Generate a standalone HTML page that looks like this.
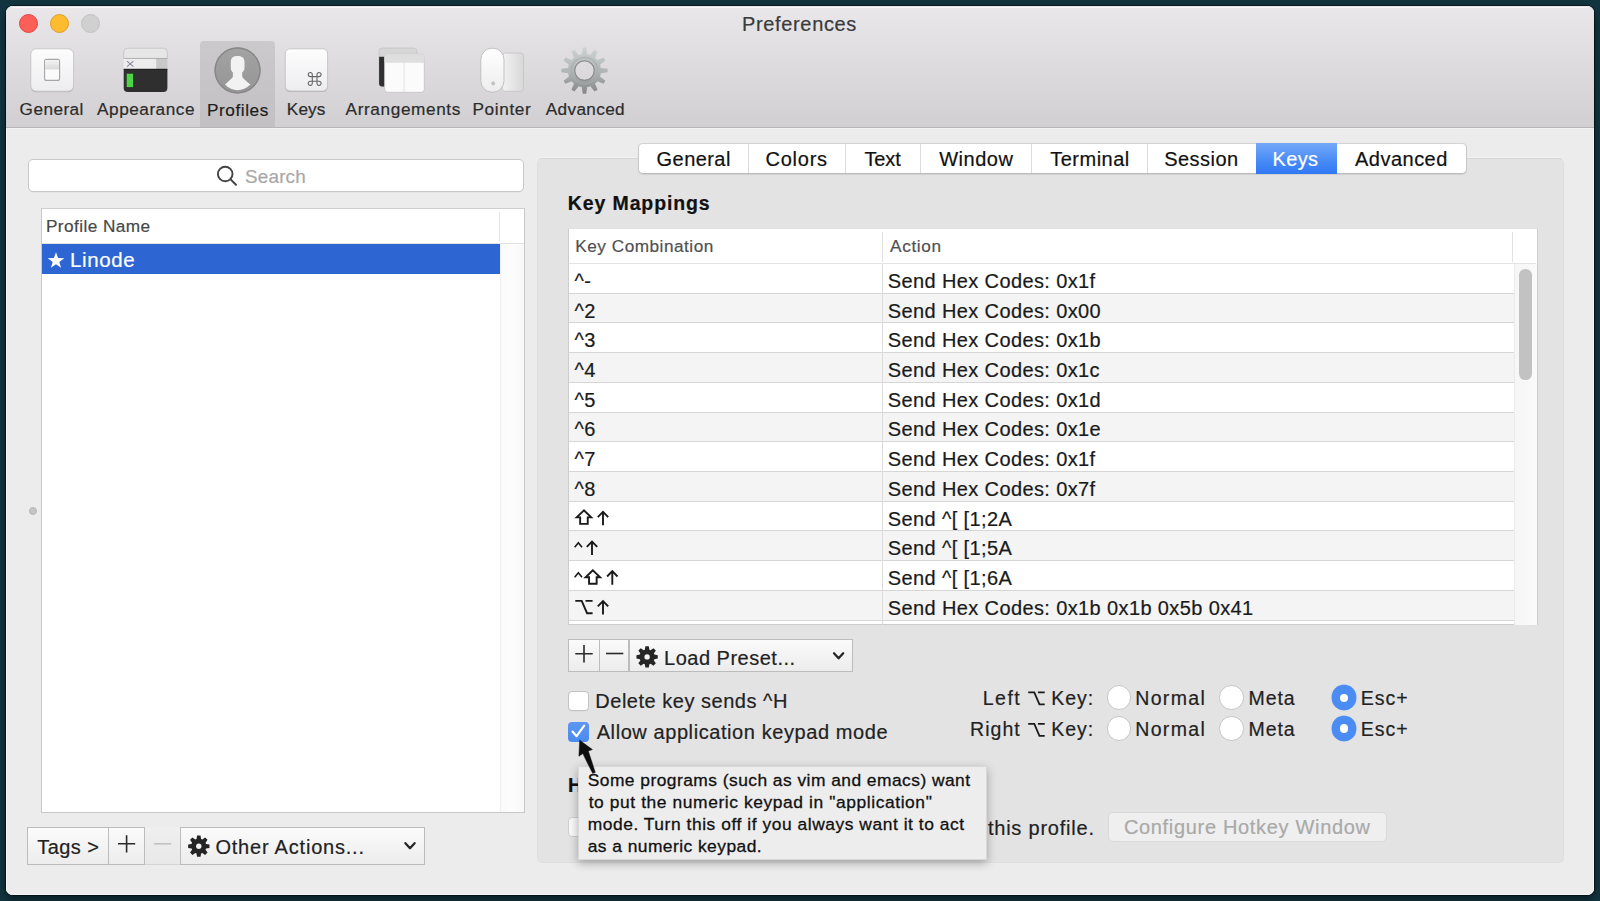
<!DOCTYPE html>
<html><head><meta charset="utf-8">
<style>
html,body{margin:0;padding:0}
body{width:1600px;height:901px;background:#12343f;position:relative;overflow:hidden;font-family:"Liberation Sans",sans-serif}
div{box-sizing:border-box}
.a{position:absolute}
.t{position:absolute;white-space:pre;font-family:"Liberation Sans",sans-serif}
svg{position:absolute;overflow:visible}
</style></head><body>
<!-- window -->
<div class="a" style="left:6px;top:6px;width:1588px;height:889px;border-radius:7px 7px 7px 7px;background:#ececec;box-shadow:0 0 0 0.8px rgba(0,5,10,0.75), 0 5px 10px rgba(0,0,0,0.45), inset 1px 0 0 #f7f7f7, inset -1px 0 0 #f5f5f5, inset 0 -1px 0 #f7f7f7"></div>
<!-- toolbar -->
<div class="a" style="left:6px;top:6px;width:1588px;height:122px;border-radius:7px 7px 0 0;background:linear-gradient(#e9e7e9,#d1cfd2);border-bottom:1px solid #b6b5b6"></div>
<div class="a" style="left:6px;top:128px;width:1588px;height:1px;background:#f2f2f2"></div>
<div class="a" style="left:12px;top:6.5px;width:1576px;height:1px;background:rgba(255,255,255,0.6)"></div>
<!-- traffic lights -->
<div class="a" style="left:18.7px;top:13.8px;width:19.4px;height:19.4px;border-radius:50%;background:#fb5f57;border:1px solid #e2463f"></div>
<div class="a" style="left:49.7px;top:13.8px;width:19.4px;height:19.4px;border-radius:50%;background:#fdbb2f;border:1px solid #e09e2a"></div>
<div class="a" style="left:80.7px;top:13.8px;width:19.4px;height:19.4px;border-radius:50%;background:#d1d0d1;border:1px solid #c3c2c3"></div>
<!-- Profiles selected -->
<div class="a" style="left:200px;top:41px;width:75px;height:86px;border-radius:4px 4px 0 0;background:linear-gradient(#cbc9cb,#c2c0c2)"></div>


<!-- search -->
<div class="a" style="left:27.8px;top:159.2px;width:496.7px;height:32.4px;border-radius:5px;background:#fff;border:1px solid #c9c9c9;box-shadow:0 0.5px 0 rgba(0,0,0,0.05)"></div>
<svg style="left:0;top:0" width="1" height="1"><circle cx="225.2" cy="174" r="7.3" fill="none" stroke="#444" stroke-width="1.9"/><line x1="230.6" y1="179.4" x2="236" y2="184.8" stroke="#444" stroke-width="2" stroke-linecap="round"/></svg>

<!-- profile list -->
<div class="a" style="left:41px;top:208.3px;width:483.6px;height:604.5px;background:#fff;border:1px solid #c8c8c8;border-top-color:#cfcfcf"></div>
<div class="a" style="left:42px;top:243px;width:482px;height:1px;background:#e3e3e3"></div>
<div class="a" style="left:499.3px;top:212px;width:1px;height:30px;background:#e6e6e6"></div>
<div class="a" style="left:500px;top:244px;width:24px;height:568px;background:linear-gradient(90deg,#fafafa,#fdfdfd 50%,#f7f7f7);border-left:1px solid #f0f0f0"></div>
<div class="a" style="left:41.8px;top:244px;width:458.5px;height:29.5px;background:#2d66d3"></div>
<svg style="left:0;top:0" width="1" height="1"><path d="M56.0,252.2 L58.1,258.1 L64.3,258.2 L59.3,261.9 L61.1,267.8 L56.0,264.3 L50.9,267.8 L52.7,261.9 L47.7,258.2 L53.9,258.1 Z" fill="#fff"/></svg>
<div class="a" style="left:29px;top:506.5px;width:8px;height:8px;border-radius:50%;background:#c4c4c4;border:1px solid #b9b9b9"></div>

<!-- bottom-left buttons -->
<div class="a" style="left:27.2px;top:826.6px;width:81.4px;height:38px;background:linear-gradient(#fbfbfb,#ececec);border:1px solid #bcbcbc"></div>
<div class="a" style="left:107.8px;top:826.6px;width:37px;height:38px;background:linear-gradient(#fbfbfb,#ececec);border:1px solid #bcbcbc"></div>
<div class="a" style="left:144.5px;top:826.6px;width:36px;height:38px;background:linear-gradient(#efefef,#e8e8e8);border-bottom:1px solid #d4d4d4"></div>
<div class="a" style="left:180.3px;top:826.6px;width:244.3px;height:38px;background:linear-gradient(#fbfbfb,#ececec);border:1px solid #bcbcbc"></div>
<svg style="left:0;top:0" width="1" height="1">
<path d="M126.6,835.2 V852.4 M118,843.8 H135.2" stroke="#2a2a2a" stroke-width="1.6"/>
<path d="M154,843.8 H171.3" stroke="#c2c2c2" stroke-width="1.6"/>
<path d="M405.4,843.2 L410,848.2 L414.6,843.2" fill="none" stroke="#262626" stroke-width="2.3" stroke-linecap="round" stroke-linejoin="round"/>
</svg>

<!-- right panel -->
<div class="a" style="left:537.3px;top:158.3px;width:1026.9px;height:704.7px;border-radius:5px;background:#e3e3e3;border:1px solid #dfdfdf;border-top-color:#d6d6d6;box-shadow:0 -1px 0 #f2f2f2"></div>

<!-- tab bar -->
<div class="a" style="left:637.8px;top:143.1px;width:829px;height:31.2px;border-radius:5px;background:#fff;border:1px solid #c8c8c8;border-top-color:#d3d3d3;border-bottom-color:#b9b9b9;box-shadow:0 0.5px 1px rgba(0,0,0,0.08)"></div>
<div class="a" style="left:748.2px;top:144.1px;width:1px;height:29.2px;background:#dcdcdc"></div>
<div class="a" style="left:845.3px;top:144.1px;width:1px;height:29.2px;background:#dcdcdc"></div>
<div class="a" style="left:919.6px;top:144.1px;width:1px;height:29.2px;background:#dcdcdc"></div>
<div class="a" style="left:1031.1px;top:144.1px;width:1px;height:29.2px;background:#dcdcdc"></div>
<div class="a" style="left:1147px;top:144.1px;width:1px;height:29.2px;background:#dcdcdc"></div>
<div class="a" style="left:1256.3px;top:143.1px;width:80.8px;height:31.2px;background:linear-gradient(#74a9f8,#4a8cf6 55%,#3079f4)"></div>

<!-- table -->
<div class="a" style="left:568.3px;top:228.4px;width:969.3px;height:397px;background:#fff;border:1px solid #cdcdcd;border-top-color:#e0e0e0"></div>
<div class="a" style="left:569.3px;top:263px;width:967px;height:1px;background:#e4e4e4"></div>
<div class="a" style="left:882px;top:232px;width:1px;height:30px;background:#e2e2e2"></div>
<div class="a" style="left:1512px;top:232px;width:1px;height:30px;background:#e2e2e2"></div>
<div class="a" style="left:569.3px;top:264.00px;width:944.3px;height:29.72px;background:#ffffff"></div>
<div class="a" style="left:569.3px;top:292.72px;width:944.3px;height:1px;background:#d6d6d6"></div>
<div class="a" style="left:569.3px;top:293.72px;width:944.3px;height:29.72px;background:#f4f4f4"></div>
<div class="a" style="left:569.3px;top:322.44px;width:944.3px;height:1px;background:#d6d6d6"></div>
<div class="a" style="left:569.3px;top:323.44px;width:944.3px;height:29.72px;background:#ffffff"></div>
<div class="a" style="left:569.3px;top:352.16px;width:944.3px;height:1px;background:#d6d6d6"></div>
<div class="a" style="left:569.3px;top:353.16px;width:944.3px;height:29.72px;background:#f4f4f4"></div>
<div class="a" style="left:569.3px;top:381.88px;width:944.3px;height:1px;background:#d6d6d6"></div>
<div class="a" style="left:569.3px;top:382.88px;width:944.3px;height:29.72px;background:#ffffff"></div>
<div class="a" style="left:569.3px;top:411.60px;width:944.3px;height:1px;background:#d6d6d6"></div>
<div class="a" style="left:569.3px;top:412.60px;width:944.3px;height:29.72px;background:#f4f4f4"></div>
<div class="a" style="left:569.3px;top:441.32px;width:944.3px;height:1px;background:#d6d6d6"></div>
<div class="a" style="left:569.3px;top:442.32px;width:944.3px;height:29.72px;background:#ffffff"></div>
<div class="a" style="left:569.3px;top:471.04px;width:944.3px;height:1px;background:#d6d6d6"></div>
<div class="a" style="left:569.3px;top:472.04px;width:944.3px;height:29.72px;background:#f4f4f4"></div>
<div class="a" style="left:569.3px;top:500.76px;width:944.3px;height:1px;background:#d6d6d6"></div>
<div class="a" style="left:569.3px;top:501.76px;width:944.3px;height:29.72px;background:#ffffff"></div>
<div class="a" style="left:569.3px;top:530.48px;width:944.3px;height:1px;background:#d6d6d6"></div>
<div class="a" style="left:569.3px;top:531.48px;width:944.3px;height:29.72px;background:#f4f4f4"></div>
<div class="a" style="left:569.3px;top:560.20px;width:944.3px;height:1px;background:#d6d6d6"></div>
<div class="a" style="left:569.3px;top:561.20px;width:944.3px;height:29.72px;background:#ffffff"></div>
<div class="a" style="left:569.3px;top:589.92px;width:944.3px;height:1px;background:#d6d6d6"></div>
<div class="a" style="left:569.3px;top:590.92px;width:944.3px;height:29.72px;background:#f4f4f4"></div>
<div class="a" style="left:569.3px;top:619.64px;width:944.3px;height:1px;background:#d6d6d6"></div>
<div class="a" style="left:569.3px;top:620.64px;width:944.3px;height:3.86px;background:#ffffff"></div>
<div class="a" style="left:882px;top:264px;width:1px;height:360.5px;background:#dcdcdc"></div>
<div class="a" style="left:1513.6px;top:264px;width:23px;height:360.5px;background:linear-gradient(90deg,#f6f6f6,#fafafa);border-left:1px solid #ebebeb"></div>
<div class="a" style="left:1519.4px;top:269px;width:12.6px;height:111px;border-radius:6.3px;background:#c2c2c2"></div>

<!-- preset buttons -->
<div class="a" style="left:568.3px;top:639.3px;width:31.5px;height:32.4px;background:linear-gradient(#fbfbfb,#ececec);border:1px solid #bcbcbc"></div>
<div class="a" style="left:598.8px;top:639.3px;width:30.7px;height:32.4px;background:linear-gradient(#fbfbfb,#ececec);border:1px solid #bcbcbc"></div>
<div class="a" style="left:628.5px;top:639.3px;width:224.2px;height:32.4px;background:linear-gradient(#fbfbfb,#ececec);border:1px solid #bcbcbc"></div>
<svg style="left:0;top:0" width="1" height="1">
<path d="M584,645 V662.4 M575.3,653.7 H592.7" stroke="#2a2a2a" stroke-width="1.6"/>
<path d="M606,653.5 H623.3" stroke="#2a2a2a" stroke-width="1.6"/>
<path d="M834,653.3 L838.6,658.3 L843.2,653.3" fill="none" stroke="#262626" stroke-width="2.3" stroke-linecap="round" stroke-linejoin="round"/>
</svg>

<!-- checkboxes -->
<div class="a" style="left:567.7px;top:690.7px;width:21px;height:20.3px;border-radius:4px;background:#fff;border:1px solid #c3c3c3;box-shadow:0 0.5px 0 rgba(0,0,0,0.06)"></div>
<div class="a" style="left:567.7px;top:721.6px;width:21px;height:20.8px;border-radius:4px;background:linear-gradient(#5b97f2,#4b8aef)"></div>
<svg style="left:0;top:0" width="1" height="1"><path d="M572.5,731.6 L576.6,736.2 L584.2,725.6" fill="none" stroke="#fff" stroke-width="2.2" stroke-linecap="round" stroke-linejoin="round"/></svg>
<div class="a" style="left:567.7px;top:816.7px;width:21px;height:20.6px;border-radius:4px;background:#f9f9f9;border:1px solid #cfcfcf"></div>

<!-- radios -->
<div class="a" style="left:1107.10px;top:685.40px;width:24.4px;height:24.4px;border-radius:50%;background:#fff;border:1px solid #c6c6c6"></div>
<div class="a" style="left:1219.30px;top:685.40px;width:24.4px;height:24.4px;border-radius:50%;background:#fff;border:1px solid #c6c6c6"></div>
<div class="a" style="left:1332.00px;top:685.40px;width:24.4px;height:24.4px;border-radius:50%;background:#4a8cf3;box-shadow:0 0 0 0.5px #6aa0f0"></div>
<div class="a" style="left:1340.10px;top:693.50px;width:8.2px;height:8.2px;border-radius:50%;background:#fff"></div>
<div class="a" style="left:1107.10px;top:716.30px;width:24.4px;height:24.4px;border-radius:50%;background:#fff;border:1px solid #c6c6c6"></div>
<div class="a" style="left:1219.30px;top:716.30px;width:24.4px;height:24.4px;border-radius:50%;background:#fff;border:1px solid #c6c6c6"></div>
<div class="a" style="left:1332.00px;top:716.30px;width:24.4px;height:24.4px;border-radius:50%;background:#4a8cf3;box-shadow:0 0 0 0.5px #6aa0f0"></div>
<div class="a" style="left:1340.10px;top:724.40px;width:8.2px;height:8.2px;border-radius:50%;background:#fff"></div>
<!-- configure hotkey -->
<div class="a" style="left:1108px;top:811.8px;width:278.8px;height:29.8px;border-radius:5px;background:#efefef;border:1px solid #d9d9d9"></div>

<svg style="left:0;top:0" width="1" height="1"><defs>
<linearGradient id="gw" x1="0" y1="0" x2="0" y2="1"><stop offset="0" stop-color="#fdfdfd"/><stop offset="1" stop-color="#ededf0"/></linearGradient>
<linearGradient id="gsw" x1="0" y1="0" x2="0" y2="1"><stop offset="0" stop-color="#f4f4f4"/><stop offset="1" stop-color="#d9d9d9"/></linearGradient>
<linearGradient id="ggear" x1="0" y1="0" x2="0" y2="1"><stop offset="0" stop-color="#cdd3d3"/><stop offset="0.55" stop-color="#aeb2b2"/><stop offset="1" stop-color="#858787"/></linearGradient>
<linearGradient id="gpad" x1="0" y1="0" x2="1" y2="0"><stop offset="0" stop-color="#f2f2f2"/><stop offset="1" stop-color="#d8d8d8"/></linearGradient>
<linearGradient id="gmouse" x1="0" y1="0" x2="0" y2="1"><stop offset="0" stop-color="#ffffff"/><stop offset="1" stop-color="#ededed"/></linearGradient>
<linearGradient id="gprof" x1="0" y1="0" x2="0" y2="1"><stop offset="0" stop-color="#a3a3a3"/><stop offset="1" stop-color="#959595"/></linearGradient>
</defs>
<rect x="30.8" y="49.3" width="42.8" height="43" rx="5.5" fill="#b3b3b3"/>
<rect x="30.8" y="48.8" width="42.8" height="42.4" rx="5.5" fill="url(#gw)" stroke="#c6c6c6" stroke-width="0.9"/>
<rect x="44.6" y="59.4" width="15" height="21" rx="2" fill="#fbfbfb" stroke="#a5a5a5" stroke-width="1.1"/>
<rect x="45.2" y="60" width="13.8" height="9.4" fill="url(#gsw)"/>
<path d="M123.7,69.2 H167.4 V87.9 a4,4 0 0 1 -4,4 H127.7 a4,4 0 0 1 -4,-4 Z" fill="#2f2f2f"/>
<path d="M123.7,58.4 V52.2 a4,4 0 0 1 4,-4 H163.4 a4,4 0 0 1 4,4 V58.4 Z" fill="#e6e6e6" stroke="#c2c2c2" stroke-width="0.8"/>
<rect x="123.7" y="58.4" width="32.6" height="10.8" fill="#ededed"/>
<rect x="156.3" y="58.4" width="11.1" height="10.8" fill="#c8c8c8"/>
<line x1="123.7" y1="58.5" x2="167.4" y2="58.5" stroke="#a9a9a9" stroke-width="0.8"/>
<line x1="123.7" y1="69.3" x2="167.4" y2="69.3" stroke="#0c0c0c" stroke-width="1"/>
<path d="M127,61.2 L133.4,66.6 M133.4,61.2 L127,66.6" stroke="#8f8398" stroke-width="1.1"/>
<rect x="126.7" y="73.7" width="6.4" height="13.4" fill="#4dd545"/>
<circle cx="237.55" cy="70.45" r="23.1" fill="url(#gprof)"/>
<circle cx="237.55" cy="70.45" r="22.4" fill="none" stroke="#878787" stroke-width="1.4"/>
<path d="M230.8,62 C230.8,57 234,56 237.6,56 C241.5,56 244.5,57.5 244.5,62 L244.5,68 C244.5,70.5 243.2,71.5 242.2,72.5 L242.2,76.5 C242.7,78.5 246,80.5 250.4,84.6 C246.5,88.6 242,90.2 237.6,90.2 C233,90.2 228.6,88.6 225,84.6 C229,80.5 232.4,78.5 232.9,76.5 L232.9,72.5 C231.9,71.5 230.8,70.5 230.8,68 Z" fill="#f2f2f2"/>
<rect x="285.2" y="49.3" width="42.4" height="42.8" rx="5" fill="#b3b3b3"/>
<rect x="285.2" y="48.8" width="42.4" height="42.2" rx="5" fill="url(#gw)" stroke="#c4c4c4" stroke-width="0.9"/>
<path d="M312.3,76.6 H317 V81.3 H312.3 Z M312.3,76.6 V74.6 a2.05,2.05 0 1 0 -2.05,2 H312.3 M317,76.6 V74.6 a2.05,2.05 0 1 1 2.05,2 H317 M312.3,81.3 V83.3 a2.05,2.05 0 1 1 -2.05,-2 H312.3 M317,81.3 V83.3 a2.05,2.05 0 1 0 2.05,-2 H317" fill="none" stroke="#666" stroke-width="1.1"/>
<rect x="379.1" y="48.1" width="37.8" height="38.3" rx="3" fill="#d6d6d6" stroke="#c4c4c4" stroke-width="0.8"/>
<path d="M379.1,56.8 H384.8 V86.4 H382.1 a3,3 0 0 1 -3,-3 Z" fill="#303030"/>
<rect x="384.6" y="54.3" width="39.7" height="38" rx="3" fill="#fbfbfb" stroke="#c4c4c4" stroke-width="0.8"/>
<path d="M384.6,62.7 V57.3 a3,3 0 0 1 3,-3 H421.3 a3,3 0 0 1 3,3 V62.7 Z" fill="#dedede"/>
<line x1="404.1" y1="62.7" x2="404.1" y2="92.3" stroke="#dcdcdc" stroke-width="0.8"/>
<rect x="502.3" y="53" width="21.2" height="38.4" rx="3" fill="url(#gpad)" stroke="#c3c3c3" stroke-width="0.8"/>
<rect x="480.8" y="48.3" width="23.2" height="43.8" rx="10.5" ry="11.5" fill="url(#gmouse)" stroke="#c0c0c0" stroke-width="1"/>
<ellipse cx="493.2" cy="83.4" rx="1.9" ry="2.1" fill="#c4c4c4"/>
<path d="M581.80,54.22 L582.75,47.47 L586.25,47.47 L587.20,54.22 A16.6,16.6 0 0 1 590.35,55.07 L594.55,49.69 L597.58,51.44 L595.03,57.77 A16.6,16.6 0 0 1 597.33,60.07 L603.66,57.52 L605.41,60.55 L600.03,64.75 A16.6,16.6 0 0 1 600.88,67.90 L607.63,68.85 L607.63,72.35 L600.88,73.30 A16.6,16.6 0 0 1 600.03,76.45 L605.41,80.65 L603.66,83.68 L597.33,81.13 A16.6,16.6 0 0 1 595.03,83.43 L597.58,89.76 L594.55,91.51 L590.35,86.13 A16.6,16.6 0 0 1 587.20,86.98 L586.25,93.73 L582.75,93.73 L581.80,86.98 A16.6,16.6 0 0 1 578.65,86.13 L574.45,91.51 L571.42,89.76 L573.97,83.43 A16.6,16.6 0 0 1 571.67,81.13 L565.34,83.68 L563.59,80.65 L568.97,76.45 A16.6,16.6 0 0 1 568.12,73.30 L561.37,72.35 L561.37,68.85 L568.12,67.90 A16.6,16.6 0 0 1 568.97,64.75 L563.59,60.55 L565.34,57.52 L571.67,60.07 A16.6,16.6 0 0 1 573.97,57.77 L571.42,51.44 L574.45,49.69 L578.65,55.07 A16.6,16.6 0 0 1 581.80,54.22 Z M575.20,70.60 a9.3,9.3 0 1 0 18.60,0 a9.3,9.3 0 1 0 -18.60,0 Z" fill="url(#ggear)" fill-rule="evenodd"/>
<circle cx="584.5" cy="70.6" r="13.2" fill="none" stroke="#a9adad" stroke-width="1.2" opacity="0.8"/>
<circle cx="584.5" cy="70.6" r="9.8" fill="none" stroke="#888b8b" stroke-width="1.1"/>
<path d="M644.80,649.66 L645.40,646.23 L648.80,646.23 L649.40,649.66 A7.6,7.6 0 0 1 650.60,650.15 L653.44,648.16 L655.84,650.56 L653.85,653.40 A7.6,7.6 0 0 1 654.34,654.60 L657.77,655.20 L657.77,658.60 L654.34,659.20 A7.6,7.6 0 0 1 653.85,660.40 L655.84,663.24 L653.44,665.64 L650.60,663.65 A7.6,7.6 0 0 1 649.40,664.14 L648.80,667.57 L645.40,667.57 L644.80,664.14 A7.6,7.6 0 0 1 643.60,663.65 L640.76,665.64 L638.36,663.24 L640.35,660.40 A7.6,7.6 0 0 1 639.86,659.20 L636.43,658.60 L636.43,655.20 L639.86,654.60 A7.6,7.6 0 0 1 640.35,653.40 L638.36,650.56 L640.76,648.16 L643.60,650.15 A7.6,7.6 0 0 1 644.80,649.66 Z M644.40,656.90 a2.7,2.7 0 1 0 5.40,0 a2.7,2.7 0 1 0 -5.40,0 Z" fill="#252525" fill-rule="evenodd"/>
<path d="M196.50,838.96 L197.10,835.53 L200.50,835.53 L201.10,838.96 A7.6,7.6 0 0 1 202.30,839.45 L205.14,837.46 L207.54,839.86 L205.55,842.70 A7.6,7.6 0 0 1 206.04,843.90 L209.47,844.50 L209.47,847.90 L206.04,848.50 A7.6,7.6 0 0 1 205.55,849.70 L207.54,852.54 L205.14,854.94 L202.30,852.95 A7.6,7.6 0 0 1 201.10,853.44 L200.50,856.87 L197.10,856.87 L196.50,853.44 A7.6,7.6 0 0 1 195.30,852.95 L192.46,854.94 L190.06,852.54 L192.05,849.70 A7.6,7.6 0 0 1 191.56,848.50 L188.13,847.90 L188.13,844.50 L191.56,843.90 A7.6,7.6 0 0 1 192.05,842.70 L190.06,839.86 L192.46,837.46 L195.30,839.45 A7.6,7.6 0 0 1 196.50,838.96 Z M196.10,846.20 a2.7,2.7 0 1 0 5.40,0 a2.7,2.7 0 1 0 -5.40,0 Z" fill="#252525" fill-rule="evenodd"/>
<path d="M583.95,510.40 L576.70,517.40 H580.15 V523.90 H587.75 V517.40 H591.20 Z" fill="none" stroke="#1a1a1a" stroke-width="1.9" stroke-linejoin="miter"/>
<path d="M603.00,525.30 V511.80 M597.80,517.10 L603.00,511.80 L608.20,517.10" fill="none" stroke="#1a1a1a" stroke-width="1.9"/>
<path d="M574.70,547.30 L578.35,542.80 L582.00,547.30" fill="none" stroke="#1a1a1a" stroke-width="1.6"/>
<path d="M592.00,555.00 V541.50 M586.80,546.80 L592.00,541.50 L597.20,546.80" fill="none" stroke="#1a1a1a" stroke-width="1.9"/>
<path d="M574.70,577.30 L578.35,572.80 L582.00,577.30" fill="none" stroke="#1a1a1a" stroke-width="1.6"/>
<path d="M592.85,570.20 L585.60,577.20 H589.05 V583.70 H596.65 V577.20 H600.10 Z" fill="none" stroke="#1a1a1a" stroke-width="1.9" stroke-linejoin="miter"/>
<path d="M612.30,584.70 V571.20 M607.10,576.50 L612.30,571.20 L617.50,576.50" fill="none" stroke="#1a1a1a" stroke-width="1.9"/>
<path d="M575.30,600.90 H581.70 L587.06,613.20 H592.60 M585.51,600.90 H592.60" fill="none" stroke="#1a1a1a" stroke-width="1.9"/>
<path d="M603.00,614.50 V601.00 M597.80,606.30 L603.00,601.00 L608.20,606.30" fill="none" stroke="#1a1a1a" stroke-width="1.9"/>
<path d="M1028.20,692.40 H1034.31 L1039.42,704.30 H1044.70 M1037.93,692.40 H1044.70" fill="none" stroke="#1a1a1a" stroke-width="1.8"/>
<path d="M1028.20,723.90 H1034.31 L1039.42,735.80 H1044.70 M1037.93,723.90 H1044.70" fill="none" stroke="#1a1a1a" stroke-width="1.8"/>
</svg>
<div class="t" style="left:742.00px;top:13.87px;font-size:20px;line-height:20px;color:#3a3a3a;letter-spacing:0.650px;-webkit-text-stroke:0.2px #3a3a3a">Preferences</div>
<div class="t" style="left:19.60px;top:101.44px;font-size:17.2px;line-height:17.2px;color:#2b2b2b;letter-spacing:0.442px;-webkit-text-stroke:0.2px #2b2b2b">General</div>
<div class="t" style="left:97.10px;top:101.44px;font-size:17.2px;line-height:17.2px;color:#2b2b2b;letter-spacing:0.517px;-webkit-text-stroke:0.2px #2b2b2b">Appearance</div>
<div class="t" style="left:207.00px;top:101.54px;font-size:17.2px;line-height:17.2px;color:#1c1c1c;letter-spacing:0.571px;-webkit-text-stroke:0.2px #1c1c1c">Profiles</div>
<div class="t" style="left:286.80px;top:101.44px;font-size:17.2px;line-height:17.2px;color:#2b2b2b;letter-spacing:0.133px;-webkit-text-stroke:0.2px #2b2b2b">Keys</div>
<div class="t" style="left:345.60px;top:101.44px;font-size:17.2px;line-height:17.2px;color:#2b2b2b;letter-spacing:0.618px;-webkit-text-stroke:0.2px #2b2b2b">Arrangements</div>
<div class="t" style="left:472.50px;top:101.44px;font-size:17.2px;line-height:17.2px;color:#2b2b2b;letter-spacing:0.633px;-webkit-text-stroke:0.2px #2b2b2b">Pointer</div>
<div class="t" style="left:545.70px;top:101.44px;font-size:17.2px;line-height:17.2px;color:#2b2b2b;letter-spacing:0.357px;-webkit-text-stroke:0.2px #2b2b2b">Advanced</div>
<div class="t" style="left:245.00px;top:167.60px;font-size:18.9px;line-height:18.9px;color:#a8a8a8;letter-spacing:0.180px;-webkit-text-stroke:0.2px #a8a8a8">Search</div>
<div class="t" style="left:45.90px;top:218.14px;font-size:17.2px;line-height:17.2px;color:#474747;letter-spacing:0.445px;-webkit-text-stroke:0.2px #474747">Profile Name</div>
<div class="t" style="left:70.00px;top:250.24px;font-size:20.5px;line-height:20.5px;color:#ffffff;letter-spacing:0.600px;-webkit-text-stroke:0.2px #ffffff">Linode</div>
<div class="t" style="left:656.60px;top:148.77px;font-size:20px;line-height:20px;color:#111111;letter-spacing:0.433px;-webkit-text-stroke:0.2px #111111">General</div>
<div class="t" style="left:765.50px;top:148.77px;font-size:20px;line-height:20px;color:#111111;letter-spacing:0.760px;-webkit-text-stroke:0.2px #111111">Colors</div>
<div class="t" style="left:864.40px;top:148.77px;font-size:20px;line-height:20px;color:#111111;letter-spacing:-0.100px;-webkit-text-stroke:0.2px #111111">Text</div>
<div class="t" style="left:939.20px;top:148.77px;font-size:20px;line-height:20px;color:#111111;letter-spacing:0.500px;-webkit-text-stroke:0.2px #111111">Window</div>
<div class="t" style="left:1050.20px;top:148.77px;font-size:20px;line-height:20px;color:#111111;letter-spacing:0.500px;-webkit-text-stroke:0.2px #111111">Terminal</div>
<div class="t" style="left:1164.20px;top:148.77px;font-size:20px;line-height:20px;color:#111111;letter-spacing:0.467px;-webkit-text-stroke:0.2px #111111">Session</div>
<div class="t" style="left:1355.00px;top:148.77px;font-size:20px;line-height:20px;color:#111111;letter-spacing:0.486px;-webkit-text-stroke:0.2px #111111">Advanced</div>
<div class="t" style="left:1272.50px;top:148.77px;font-size:20px;line-height:20px;color:#ffffff;letter-spacing:0.367px;-webkit-text-stroke:0.2px #ffffff">Keys</div>
<div class="t" style="left:567.80px;top:194.29px;font-size:19.5px;line-height:19.5px;color:#111111;letter-spacing:0.882px;font-weight:700;-webkit-text-stroke:0.2px #111111">Key Mappings</div>
<div class="t" style="left:575.30px;top:238.44px;font-size:17.2px;line-height:17.2px;color:#505050;letter-spacing:0.507px;-webkit-text-stroke:0.2px #505050">Key Combination</div>
<div class="t" style="left:890.00px;top:238.44px;font-size:17.2px;line-height:17.2px;color:#505050;letter-spacing:0.680px;-webkit-text-stroke:0.2px #505050">Action</div>
<div class="t" style="left:664.00px;top:647.77px;font-size:20px;line-height:20px;color:#222222;letter-spacing:0.508px;-webkit-text-stroke:0.2px #222222">Load Preset...</div>
<div class="t" style="left:595.30px;top:691.37px;font-size:20px;line-height:20px;color:#222222;letter-spacing:0.517px;-webkit-text-stroke:0.2px #222222">Delete key sends ^H</div>
<div class="t" style="left:596.70px;top:722.37px;font-size:20px;line-height:20px;color:#222222;letter-spacing:0.579px;-webkit-text-stroke:0.2px #222222">Allow application keypad mode</div>
<div class="t" style="left:982.70px;top:688.89px;font-size:19.5px;line-height:19.5px;color:#222222;letter-spacing:1.500px;-webkit-text-stroke:0.2px #222222">Left</div>
<div class="t" style="left:970.00px;top:720.39px;font-size:19.5px;line-height:19.5px;color:#222222;letter-spacing:1.050px;-webkit-text-stroke:0.2px #222222">Right</div>
<div class="t" style="left:1051.30px;top:688.89px;font-size:19.5px;line-height:19.5px;color:#222222;letter-spacing:0.967px;-webkit-text-stroke:0.2px #222222">Key:</div>
<div class="t" style="left:1051.30px;top:720.39px;font-size:19.5px;line-height:19.5px;color:#222222;letter-spacing:0.967px;-webkit-text-stroke:0.2px #222222">Key:</div>
<div class="t" style="left:1135.20px;top:688.79px;font-size:19.5px;line-height:19.5px;color:#222222;letter-spacing:1.360px;-webkit-text-stroke:0.2px #222222">Normal</div>
<div class="t" style="left:1248.50px;top:688.79px;font-size:19.5px;line-height:19.5px;color:#222222;letter-spacing:0.933px;-webkit-text-stroke:0.2px #222222">Meta</div>
<div class="t" style="left:1360.80px;top:688.79px;font-size:19.5px;line-height:19.5px;color:#222222;letter-spacing:1.000px;-webkit-text-stroke:0.2px #222222">Esc+</div>
<div class="t" style="left:1135.20px;top:719.59px;font-size:19.5px;line-height:19.5px;color:#222222;letter-spacing:1.360px;-webkit-text-stroke:0.2px #222222">Normal</div>
<div class="t" style="left:1248.50px;top:719.59px;font-size:19.5px;line-height:19.5px;color:#222222;letter-spacing:0.933px;-webkit-text-stroke:0.2px #222222">Meta</div>
<div class="t" style="left:1360.80px;top:719.59px;font-size:19.5px;line-height:19.5px;color:#222222;letter-spacing:1.000px;-webkit-text-stroke:0.2px #222222">Esc+</div>
<div class="t" style="left:568.00px;top:776.19px;font-size:19.5px;line-height:19.5px;color:#111111;letter-spacing:0.382px;font-weight:700;-webkit-text-stroke:0.2px #111111">Hotkey</div>
<div class="t" style="left:987.90px;top:817.97px;font-size:20px;line-height:20px;color:#222222;letter-spacing:0.783px;-webkit-text-stroke:0.2px #222222">this profile.</div>
<div class="t" style="left:1123.90px;top:816.67px;font-size:20px;line-height:20px;color:#a9a9a9;letter-spacing:0.677px;-webkit-text-stroke:0.2px #a9a9a9">Configure Hotkey Window</div>
<div class="t" style="left:37.20px;top:836.67px;font-size:20px;line-height:20px;color:#222222;letter-spacing:0.440px;-webkit-text-stroke:0.2px #222222">Tags &gt;</div>
<div class="t" style="left:215.40px;top:836.87px;font-size:20px;line-height:20px;color:#222222;letter-spacing:0.793px;-webkit-text-stroke:0.2px #222222">Other Actions...</div>
<div class="t" style="left:887.75px;top:270.87px;font-size:20px;line-height:20px;color:#1a1a1a;letter-spacing:0.382px;-webkit-text-stroke:0.2px #1a1a1a">Send Hex Codes: 0x1f</div>
<div class="t" style="left:574.50px;top:270.87px;font-size:20px;line-height:20px;color:#1a1a1a;letter-spacing:0.382px;-webkit-text-stroke:0.2px #1a1a1a">^-</div>
<div class="t" style="left:887.75px;top:300.59px;font-size:20px;line-height:20px;color:#1a1a1a;letter-spacing:0.382px;-webkit-text-stroke:0.2px #1a1a1a">Send Hex Codes: 0x00</div>
<div class="t" style="left:574.50px;top:300.59px;font-size:20px;line-height:20px;color:#1a1a1a;letter-spacing:0.382px;-webkit-text-stroke:0.2px #1a1a1a">^2</div>
<div class="t" style="left:887.75px;top:330.31px;font-size:20px;line-height:20px;color:#1a1a1a;letter-spacing:0.382px;-webkit-text-stroke:0.2px #1a1a1a">Send Hex Codes: 0x1b</div>
<div class="t" style="left:574.50px;top:330.31px;font-size:20px;line-height:20px;color:#1a1a1a;letter-spacing:0.382px;-webkit-text-stroke:0.2px #1a1a1a">^3</div>
<div class="t" style="left:887.75px;top:360.03px;font-size:20px;line-height:20px;color:#1a1a1a;letter-spacing:0.382px;-webkit-text-stroke:0.2px #1a1a1a">Send Hex Codes: 0x1c</div>
<div class="t" style="left:574.50px;top:360.03px;font-size:20px;line-height:20px;color:#1a1a1a;letter-spacing:0.382px;-webkit-text-stroke:0.2px #1a1a1a">^4</div>
<div class="t" style="left:887.75px;top:389.75px;font-size:20px;line-height:20px;color:#1a1a1a;letter-spacing:0.382px;-webkit-text-stroke:0.2px #1a1a1a">Send Hex Codes: 0x1d</div>
<div class="t" style="left:574.50px;top:389.75px;font-size:20px;line-height:20px;color:#1a1a1a;letter-spacing:0.382px;-webkit-text-stroke:0.2px #1a1a1a">^5</div>
<div class="t" style="left:887.75px;top:419.47px;font-size:20px;line-height:20px;color:#1a1a1a;letter-spacing:0.382px;-webkit-text-stroke:0.2px #1a1a1a">Send Hex Codes: 0x1e</div>
<div class="t" style="left:574.50px;top:419.47px;font-size:20px;line-height:20px;color:#1a1a1a;letter-spacing:0.382px;-webkit-text-stroke:0.2px #1a1a1a">^6</div>
<div class="t" style="left:887.75px;top:449.19px;font-size:20px;line-height:20px;color:#1a1a1a;letter-spacing:0.382px;-webkit-text-stroke:0.2px #1a1a1a">Send Hex Codes: 0x1f</div>
<div class="t" style="left:574.50px;top:449.19px;font-size:20px;line-height:20px;color:#1a1a1a;letter-spacing:0.382px;-webkit-text-stroke:0.2px #1a1a1a">^7</div>
<div class="t" style="left:887.75px;top:478.91px;font-size:20px;line-height:20px;color:#1a1a1a;letter-spacing:0.382px;-webkit-text-stroke:0.2px #1a1a1a">Send Hex Codes: 0x7f</div>
<div class="t" style="left:574.50px;top:478.91px;font-size:20px;line-height:20px;color:#1a1a1a;letter-spacing:0.382px;-webkit-text-stroke:0.2px #1a1a1a">^8</div>
<div class="t" style="left:887.75px;top:508.63px;font-size:20px;line-height:20px;color:#1a1a1a;letter-spacing:0.382px;-webkit-text-stroke:0.2px #1a1a1a">Send ^[ [1;2A</div>
<div class="t" style="left:887.75px;top:538.35px;font-size:20px;line-height:20px;color:#1a1a1a;letter-spacing:0.382px;-webkit-text-stroke:0.2px #1a1a1a">Send ^[ [1;5A</div>
<div class="t" style="left:887.75px;top:568.07px;font-size:20px;line-height:20px;color:#1a1a1a;letter-spacing:0.382px;-webkit-text-stroke:0.2px #1a1a1a">Send ^[ [1;6A</div>
<div class="t" style="left:887.75px;top:597.79px;font-size:20px;line-height:20px;color:#1a1a1a;letter-spacing:0.382px;-webkit-text-stroke:0.2px #1a1a1a">Send Hex Codes: 0x1b 0x1b 0x5b 0x41</div>

<!-- tooltip -->
<div class="a" style="left:578.3px;top:766.2px;width:408.6px;height:93.6px;background:#ededed;border:1px solid #d8d8d8;box-shadow:0 3px 9px rgba(0,0,0,0.3)"></div>
<div class="t" style="left:587.70px;top:772.07px;font-size:17.4px;line-height:17.4px;color:#111111;letter-spacing:0.463px;-webkit-text-stroke:0.3px #111111">Some programs (such as vim and emacs) want</div>
<div class="t" style="left:588.70px;top:794.27px;font-size:17.4px;line-height:17.4px;color:#111111;letter-spacing:0.593px;-webkit-text-stroke:0.3px #111111">to put the numeric keypad in "application"</div>
<div class="t" style="left:587.70px;top:816.27px;font-size:17.4px;line-height:17.4px;color:#111111;letter-spacing:0.551px;-webkit-text-stroke:0.3px #111111">mode. Turn this off if you always want it to act</div>
<div class="t" style="left:587.70px;top:838.27px;font-size:17.4px;line-height:17.4px;color:#111111;letter-spacing:0.453px;-webkit-text-stroke:0.3px #111111">as a numeric keypad.</div>

<!-- cursor arrow annotation -->
<svg style="left:0;top:0" width="1" height="1"><path d="M579.7,740.2 L592.4,749.5 L588.3,751.0 L595.3,772.4 L592.6,773.3 L582.8,753.6 L578.9,756.2 Z" fill="#0d0d0d" stroke="#0d0d0d" stroke-width="0.5" stroke-linejoin="round"/></svg>
</body></html>
